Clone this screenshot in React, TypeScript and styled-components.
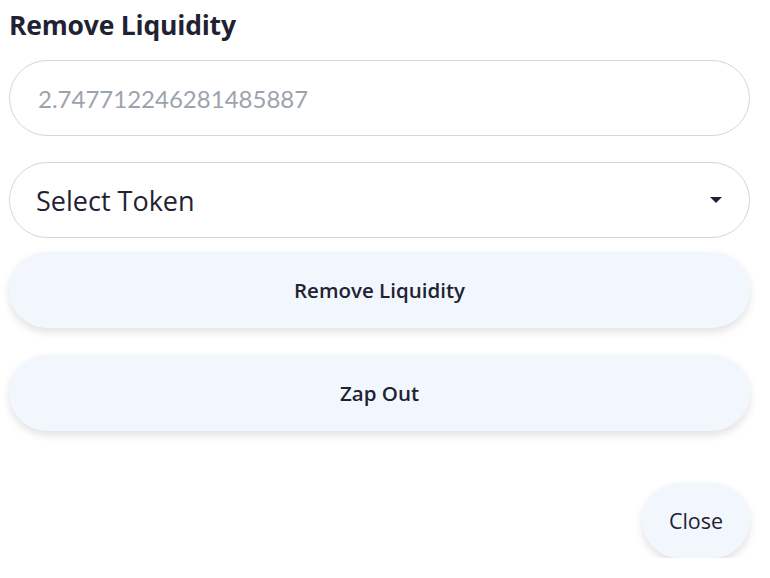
import React from "react";
import styled, { createGlobalStyle } from "styled-components";

const GlobalStyle = createGlobalStyle`
  body {
    margin: 0;
    background: #ffffff;
    font-family: "Open Sans", "Noto Sans", sans-serif;
    color: #1f2233;
  }
`;

const Wrapper = styled.div`
  width: 741px;
  padding: 8px 0 0 9px;
  display: flex;
  flex-direction: column;
`;

const Title = styled.h1`
  margin: 0 0 18px 0;
  font-size: 26.5px;
  font-weight: 700;
  line-height: 34px;
  letter-spacing: -0.2px;
  color: #1f2233;
`;

const Field = styled.div`
  height: 74px;
  border: 1px solid #d6d6d6;
  border-radius: 38px;
  display: flex;
  align-items: center;
  padding: 0 26px;
  box-sizing: content-box;
`;

const AmountInput = styled.input`
  flex: 1;
  border: none;
  outline: none;
  background: transparent;
  font-family: Lato, "Noto Sans", sans-serif;
  font-size: 24px;
  color: #1f2233;
  &::placeholder {
    color: #9ca3af;
  }
`;

const SelectField = styled(Field)`
  margin-top: 26px;
  justify-content: space-between;
`;

const SelectLabel = styled.span`
  font-size: 27px;
  color: #1f2233;
`;

const Caret = styled.span`
  width: 0;
  height: 0;
  border-left: 6px solid transparent;
  border-right: 6px solid transparent;
  border-top: 6px solid #1f2233;
  margin-right: 1px;
`;

const ActionButton = styled.button<{ $top: number }>`
  margin-top: ${(p) => p.$top}px;
  height: 76px;
  width: 100%;
  border: none;
  border-radius: 38px;
  background: #f2f7fe;
  box-shadow: 0 4px 8px rgba(0, 0, 0, 0.12);
  font-family: inherit;
  font-size: 20.5px;
  font-weight: 600;
  color: #1f2233;
  cursor: pointer;
`;

const Footer = styled.div`
  margin-top: 52px;
  display: flex;
  justify-content: flex-end;
`;

const CloseButton = styled.button`
  width: 108px;
  height: 75px;
  border: none;
  border-radius: 38px;
  background: #f2f7fe;
  box-shadow: 0 4px 8px rgba(0, 0, 0, 0.12);
  font-family: inherit;
  font-size: 21.5px;
  font-weight: 400;
  color: #1f2233;
`;

export default function App() {
  return (
    <>
      <GlobalStyle />
      <Wrapper>
        <Title>Remove Liquidity</Title>
        <Field>
          <AmountInput placeholder="2.747712246281485887" />
        </Field>
        <SelectField>
          <SelectLabel>Select Token</SelectLabel>
          <Caret />
        </SelectField>
        <ActionButton $top={14}>Remove Liquidity</ActionButton>
        <ActionButton $top={27}>Zap Out</ActionButton>
        <Footer>
          <CloseButton>Close</CloseButton>
        </Footer>
      </Wrapper>
    </>
  );
}
